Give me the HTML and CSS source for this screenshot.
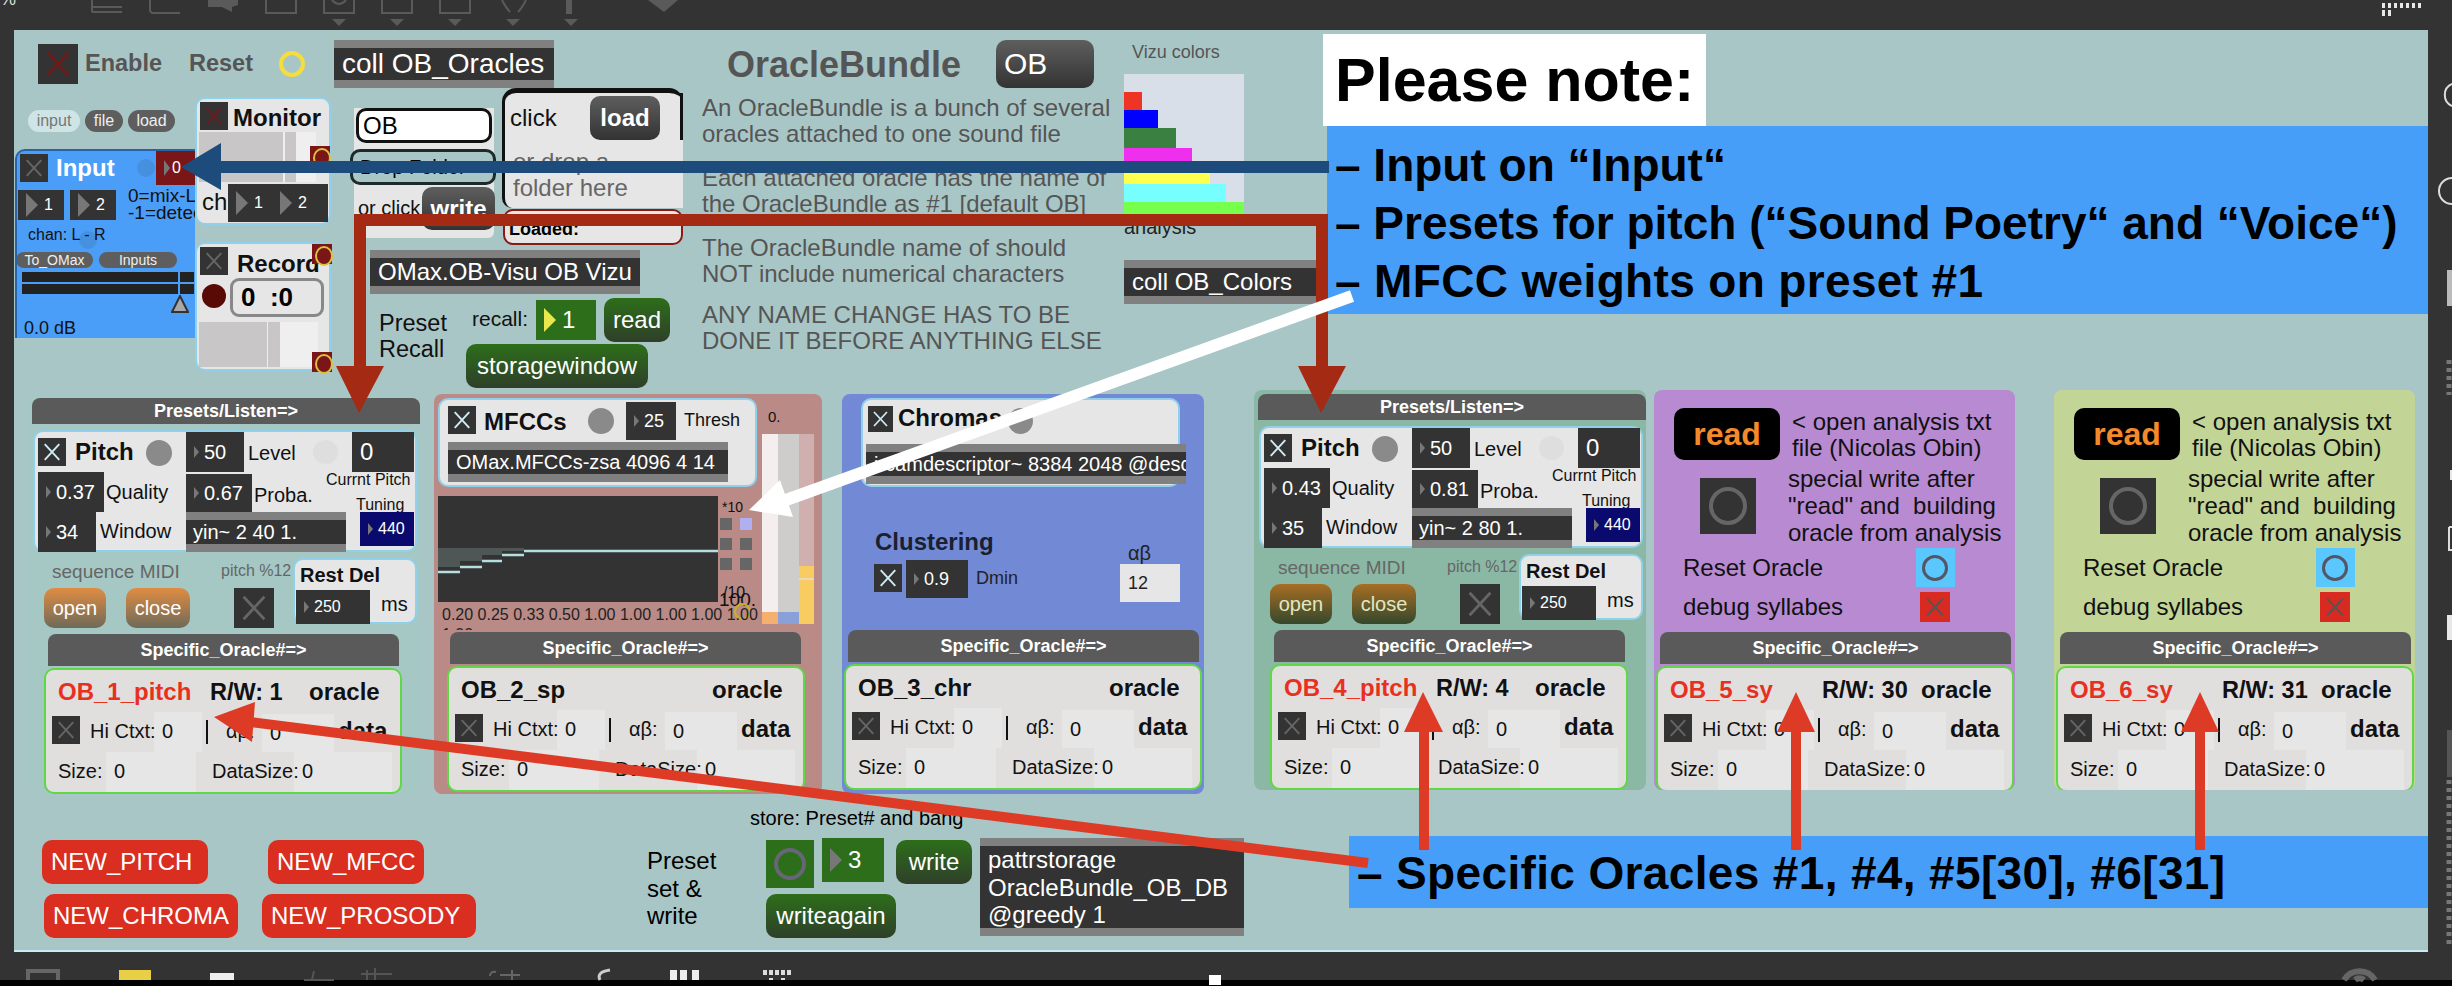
FILE: index.html
```html
<!DOCTYPE html>
<html>

<head>
    <meta charset="utf-8" />
    <title>OracleBundle</title>
    <link rel="stylesheet" href="styles.css">
</head>

<body>
<svg class="defs" width="0" height="0">
    <symbol id="x" viewBox="0 0 100 100"><path d="M24 22L76 78M76 22L24 78" fill="none" stroke="currentColor" stroke-width="7"/></symbol>
</svg>

<div class="page">
    <div class="canvas"></div>

    <!-- window chrome -->
    <svg class="chrome" width="2452" height="986" viewBox="0 0 2452 986">
        <text x="0" y="5" fill="#ddd" font-size="18" font-family="Liberation Sans">%</text>
        <g fill="none" stroke="#5a5a5a" stroke-width="2">
            <path d="M92 12H122M92 7H122M92 0V12"/>
            <path d="M150 0V10Q150 13 154 13H180"/>
            <path d="M266 0V13H296V0"/>
            <path d="M324 0V13H354V0M332 0Q339 8 346 0"/>
            <path d="M382 0V13H412V0"/>
            <path d="M440 0V13H470V0"/>
            <path d="M502 0Q506 8 510 12M526 0Q522 8 518 12"/>
        </g>
        <g fill="#5a5a5a">
            <path d="M208 0H238V5L232 7V12L222 7H208Z"/>
            <path d="M566 0H572V14H566Z"/>
            <path d="M648 0H678L664 12Z"/>
            <path d="M332 19H346L339 26Z"/><path d="M390 19H404L397 26Z"/><path d="M448 19H462L455 26Z"/><path d="M506 19H520L513 26Z"/><path d="M564 19H578L571 26Z"/>
        </g>
        <g fill="#e8e8e8">
            <path d="M2382 3h3v5h-3zM2388 3h3v5h-3zM2394 3h3v5h-3zM2400 3h3v5h-3zM2406 3h3v5h-3zM2412 3h3v5h-3zM2418 3h3v5h-3zM2382 10h3v6h-3zM2388 10h3v6h-3z"/>
            <path d="M2450 470h2v10h-2zM2447 615h5v25h-5z"/>
        </g>
        <path d="M2452 84A12 12 0 0 0 2452 106M2452 178A13 13 0 0 0 2452 204M2449 527H2452M2449 527V550H2452" fill="none" stroke="#ddd" stroke-width="2"/>
        <path d="M2447 270h5v36h-5z" fill="#bbb"/>
        <path d="M2447 730h5v47h-5z" fill="#555"/>
        <path d="M2449 780V947M2449 360V395" stroke="#777" stroke-width="5" stroke-dasharray="4 4"/>
        <rect x="0" y="980" width="2452" height="6" fill="#000"/>
        <path d="M28 980V971H58V980" fill="none" stroke="#666" stroke-width="4"/>
        <rect x="119" y="970" width="32" height="10" fill="#e8cf45"/>
        <rect x="210" y="973" width="24" height="7" fill="#eee"/>
        <path d="M312 980L314 971M304 980H334M375 968V980M367 970V980M361 974H392" fill="none" stroke="#555" stroke-width="2"/>
        <path d="M490 976Q490 971 496 972M512 970V980M500 975H520" fill="none" stroke="#666" stroke-width="2"/>
        <path d="M600 980Q596 972 610 970" fill="none" stroke="#ccc" stroke-width="3"/>
        <path d="M670 970h7v10h-7zM680 970h7v10h-7zM692 970h7v10h-7z" fill="#eee"/>
        <path d="M763 970h4v5h-4zM769 970h4v5h-4zM775 970h4v5h-4zM781 970h4v5h-4zM787 970h4v5h-4zM769 978h4v2h-4zM781 978h4v2h-4z" fill="#ddd"/>
        <rect x="1209" y="975" width="12" height="10" fill="#fff"/>
        <path d="M2344 980A18 18 0 0 1 2375 980M2355 980A7 7 0 0 1 2364 980" fill="none" stroke="#666" stroke-width="6"/>
    </svg>

    <!-- top strip -->
    <div class="toggle t-enable"><svg><use href="#x"/></svg></div>
    <div class="lbl l-enable">Enable</div>
    <div class="lbl l-reset">Reset</div>
    <div class="ring r-reset"></div>
    <div class="obj o-oracles">coll OB_Oracles</div>

    <div class="pill p-input">input</div>
    <div class="pill p-file">file</div>
    <div class="pill p-load">load</div>

    <!-- input module -->
    <div class="input-panel">
        <div class="toggle i-tog"><svg><use href="#x"/></svg></div>
        <div class="lbl i-title">Input</div>
        <div class="dot i-dot1"></div>
        <div class="dot i-dot2"></div>
        <div class="num big i-ch0"><i></i><span>0</span></div>
        <div class="num big i-ch1"><i></i><span>1</span></div>
        <div class="num big i-ch2"><i></i><span>2</span></div>
        <div class="lbl i-mix">0=mix-LR</div>
        <div class="lbl i-det">-1=detect</div>
        <div class="lbl i-chan">chan: L - R</div>
        <div class="pill p-omax">To_OMax</div>
        <div class="pill p-inputs">Inputs</div>
        <div class="meter i-m1"></div>
        <div class="meter i-m2"></div>
        <svg class="i-tri" viewBox="0 0 18 18"><path d="M9 1L17 17H1Z" fill="#a8a8a8" stroke="#333" stroke-width="2"/></svg>
        <div class="lbl i-db">0.0 dB</div>
    </div>

    <div class="mod-box mon-box">
        <div class="toggle m-tog"><svg><use href="#x"/></svg></div>
        <div class="lbl m-title">Monitor</div>
        <div class="gain m-gain"></div>
        <div class="lbl m-ch">ch</div>
        <div class="ch-pair">
            <div class="num big m-1"><i></i><span>1</span></div>
            <div class="num big m-2"><i></i><span>2</span></div>
        </div>
    </div>
    <div class="tiny b-mon"></div>

    <div class="mod-box rec-box">
        <div class="toggle m-tog"><svg><use href="#x"/></svg></div>
        <div class="lbl r-title">Record</div>
        <div class="rec-dot"></div>
        <div class="rec-time">0 &nbsp;:0</div>
        <div class="gain r-gain"></div>
    </div>
    <div class="tiny b-rec1"></div>
    <div class="tiny b-rec2"></div>

    <!-- name and folder -->
    <div class="name-back"></div>
    <div class="name-field">OB</div>
    <div class="drop-field">Drop Folder</div>
    <div class="lbl l-orclick">or click</div>
    <div class="msg dark m-write">write</div>
    <div class="click-box">
        <div class="lbl c-click">click</div>
        <div class="msg dark m-load">load</div>
        <div class="lbl c-drop">or drop a</div>
        <div class="lbl c-folder">folder here</div>
    </div>
    <div class="loaded-box">Loaded:</div>

    <div class="obj o-vizu">OMax.OB-Visu OB Vizu</div>
    <div class="lbl l-preset">Preset<br>Recall</div>
    <div class="lbl l-recall">recall:</div>
    <div class="num big green n-recall"><i class="yel"></i><span>1</span></div>
    <div class="msg green m-read">read</div>
    <div class="msg green m-storage">storagewindow</div>

    <!-- title and notes -->
    <div class="lbl l-bundle">OracleBundle</div>
    <div class="msg dark m-ob">OB</div>
    <div class="help h-1">An OracleBundle is a bunch of several<br>oracles attached to one sound file</div>
    <div class="help h-2">Each attached oracle has the name of<br>the OracleBundle as #1 [default OB]</div>
    <div class="help h-3">The OracleBundle name of should<br>NOT include numerical characters</div>
    <div class="help h-4">ANY NAME CHANGE HAS TO BE<br>DONE IT BEFORE ANYTHING ELSE</div>

    <div class="lbl l-vizu">Vizu colors</div>
    <div class="colors">
        <div class="bar" style="width:18px;background:#ee3424"></div>
        <div class="bar" style="width:34px;background:#0000ff"></div>
        <div class="bar tall" style="width:52px;background:#3a8040"></div>
        <div class="bar" style="width:68px;background:#ee30ee"></div>
        <div class="bar" style="width:86px;background:#ffff4d"></div>
        <div class="bar" style="width:102px;background:#77ffff"></div>
        <div class="bar" style="width:120px;background:#77ff4d"></div>
    </div>
    <div class="lbl l-analysis">analysis</div>
    <div class="obj o-colors">coll OB_Colors</div>

    <!-- pitch oracle 1 -->
    <div class="panel pitch-a">
        <div class="head h-presets">Presets/Listen=&gt;</div>
        <div class="mod-box pt-box"></div>
        <div class="toggle pt-tog"><svg><use href="#x"/></svg></div>
        <div class="lbl pt-title">Pitch</div>
        <div class="dot pt-on"></div>
        <div class="num pt-level"><i></i><span>50</span></div>
        <div class="lbl pt-lvl">Level</div>
        <div class="dot pt-off"></div>
        <div class="flonum pt-cur">0</div>
        <div class="num pt-q"><i></i><span>0.37</span></div>
        <div class="lbl pt-ql">Quality</div>
        <div class="num pt-p"><i></i><span>0.67</span></div>
        <div class="lbl pt-pl">Proba.</div>
        <div class="lbl pt-cp">Currnt Pitch</div>
        <div class="lbl pt-tu">Tuning</div>
        <div class="num pt-w"><i></i><span>34</span></div>
        <div class="lbl pt-wl">Window</div>
        <div class="obj pt-yin">yin~ 2 40 1.</div>
        <div class="num navy pt-440"><i></i><span>440</span></div>
        <div class="lbl pt-seq">sequence MIDI</div>
        <div class="lbl pt-mod">pitch %12</div>
        <div class="msg orange pt-open">open</div>
        <div class="msg orange pt-close">close</div>
        <div class="toggle pt-big"><svg><use href="#x"/></svg></div>
        <div class="mod-box pt-rest"></div>
        <div class="lbl pt-rd">Rest Del</div>
        <div class="num pt-250"><i></i><span>250</span></div>
        <div class="lbl pt-ms">ms</div>
        <div class="head h-spec h-spec-a">Specific_Oracle#=&gt;</div>
        <div class="oracle or-a">
            <div class="lbl or-name hot">OB_1_pitch</div>
            <div class="lbl or-rw">R/W: 1</div>
            <div class="lbl or-oracle">oracle</div>
            <div class="toggle or-tog"><svg><use href="#x"/></svg></div>
            <div class="cell c-hi"></div><div class="cell c-ab"></div><div class="cell c-sz"></div><div class="cell c-ds"></div>
            <div class="lbl or-hi">Hi Ctxt:</div><div class="lbl or-hi0">0</div>
            <div class="or-sep"></div>
            <div class="lbl or-ab">αβ:</div><div class="lbl or-ab0">0</div>
            <div class="lbl or-data">data</div>
            <div class="lbl or-sz">Size:</div><div class="lbl or-sz0">0</div>
            <div class="lbl or-ds">DataSize:</div><div class="lbl or-ds0">0</div>
        </div>
    </div>

    <!-- mfcc oracle -->
    <div class="panel mfcc">
        <div class="mod-box mf-box"></div>
        <div class="toggle mf-tog"><svg><use href="#x"/></svg></div>
        <div class="lbl mf-title">MFCCs</div>
        <div class="dot mf-on"></div>
        <div class="num mf-25"><i></i><span>25</span></div>
        <div class="lbl mf-th">Thresh</div>
        <div class="obj mf-obj">OMax.MFCCs-zsa 4096 4 14</div>
        <svg class="mf-multi" viewBox="0 0 280 106">
            <path d="M0 52H86V55H64V59H44V65H22V71H0Z" fill="#4f5656"/>
            <path d="M0 76H22M22 71H44M44 65H64M64 59H86M86 55H280" fill="none" stroke="#b5dede" stroke-width="2.5"/>
        </svg>
        <div class="lbl mf-x10">*10</div>
        <div class="sq s1"></div><div class="sq s2 lit"></div>
        <div class="sq s3"></div><div class="sq s4"></div>
        <div class="sq s5"></div><div class="sq s6"></div>
        <div class="lbl mf-div">/10</div>
        <div class="lbl mf-100">100.</div>
        <div class="ring mf-ring"></div>
        <div class="lbl mf-0">0.</div>
        <div class="vs v1"></div><div class="vs v2"></div><div class="vs v3"></div>
        <div class="mf-weights">0.20 0.25 0.33 0.50 1.00 1.00 1.00 1.00 1.00 1.00<br>1.00 1.00 1.00</div>
        <div class="head h-spec h-spec-b">Specific_Oracle#=&gt;</div>
        <div class="oracle or-b">
            <div class="lbl or-name">OB_2_sp</div>
            <div class="lbl or-oracle">oracle</div>
            <div class="toggle or-tog"><svg><use href="#x"/></svg></div>
            <div class="cell c-hi"></div><div class="cell c-ab"></div><div class="cell c-sz"></div><div class="cell c-ds"></div>
            <div class="lbl or-hi">Hi Ctxt:</div><div class="lbl or-hi0">0</div>
            <div class="or-sep"></div>
            <div class="lbl or-ab">αβ:</div><div class="lbl or-ab0">0</div>
            <div class="lbl or-data">data</div>
            <div class="lbl or-sz">Size:</div><div class="lbl or-sz0">0</div>
            <div class="lbl or-ds">DataSize:</div><div class="lbl or-ds0">0</div>
        </div>
    </div>

    <!-- chroma oracle -->
    <div class="panel chroma">
        <div class="mod-box ch-box"></div>
        <div class="toggle ch-tog"><svg><use href="#x"/></svg></div>
        <div class="lbl ch-title">Chromas</div>
        <div class="dot ch-on"></div>
        <div class="obj ch-obj">ircamdescriptor~ 8384 2048 @descriptors</div>
        <div class="lbl ch-cl">Clustering</div>
        <div class="toggle ch-tog2"><svg><use href="#x"/></svg></div>
        <div class="num ch-09"><i></i><span>0.9</span></div>
        <div class="lbl ch-dm">Dmin</div>
        <div class="lbl ch-ab">αβ</div>
        <div class="flonum ch-12">12</div>
        <div class="head h-spec h-spec-c">Specific_Oracle#=&gt;</div>
        <div class="oracle or-c">
            <div class="lbl or-name">OB_3_chr</div>
            <div class="lbl or-oracle">oracle</div>
            <div class="toggle or-tog"><svg><use href="#x"/></svg></div>
            <div class="cell c-hi"></div><div class="cell c-ab"></div><div class="cell c-sz"></div><div class="cell c-ds"></div>
            <div class="lbl or-hi">Hi Ctxt:</div><div class="lbl or-hi0">0</div>
            <div class="or-sep"></div>
            <div class="lbl or-ab">αβ:</div><div class="lbl or-ab0">0</div>
            <div class="lbl or-data">data</div>
            <div class="lbl or-sz">Size:</div><div class="lbl or-sz0">0</div>
            <div class="lbl or-ds">DataSize:</div><div class="lbl or-ds0">0</div>
        </div>
    </div>

    <!-- pitch oracle 4 -->
    <div class="panel pitch-b">
        <div class="head h-presets">Presets/Listen=&gt;</div>
        <div class="mod-box pt-box"></div>
        <div class="toggle pt-tog"><svg><use href="#x"/></svg></div>
        <div class="lbl pt-title">Pitch</div>
        <div class="dot pt-on"></div>
        <div class="num pt-level"><i></i><span>50</span></div>
        <div class="lbl pt-lvl">Level</div>
        <div class="dot pt-off"></div>
        <div class="flonum pt-cur">0</div>
        <div class="num pt-q"><i></i><span>0.43</span></div>
        <div class="lbl pt-ql">Quality</div>
        <div class="num pt-p"><i></i><span>0.81</span></div>
        <div class="lbl pt-pl">Proba.</div>
        <div class="lbl pt-cp">Currnt Pitch</div>
        <div class="lbl pt-tu">Tuning</div>
        <div class="num pt-w"><i></i><span>35</span></div>
        <div class="lbl pt-wl">Window</div>
        <div class="obj pt-yin">yin~ 2 80 1.</div>
        <div class="num navy pt-440"><i></i><span>440</span></div>
        <div class="lbl pt-seq">sequence MIDI</div>
        <div class="lbl pt-mod">pitch %12</div>
        <div class="msg orange-dim pt-open">open</div>
        <div class="msg orange-dim pt-close">close</div>
        <div class="toggle pt-big"><svg><use href="#x"/></svg></div>
        <div class="mod-box pt-rest"></div>
        <div class="lbl pt-rd">Rest Del</div>
        <div class="num pt-250"><i></i><span>250</span></div>
        <div class="lbl pt-ms">ms</div>
        <div class="head h-spec h-spec-a">Specific_Oracle#=&gt;</div>
        <div class="oracle or-a">
            <div class="lbl or-name hot">OB_4_pitch</div>
            <div class="lbl or-rw">R/W: 4</div>
            <div class="lbl or-oracle">oracle</div>
            <div class="toggle or-tog"><svg><use href="#x"/></svg></div>
            <div class="cell c-hi"></div><div class="cell c-ab"></div><div class="cell c-sz"></div><div class="cell c-ds"></div>
            <div class="lbl or-hi">Hi Ctxt:</div><div class="lbl or-hi0">0</div>
            <div class="or-sep"></div>
            <div class="lbl or-ab">αβ:</div><div class="lbl or-ab0">0</div>
            <div class="lbl or-data">data</div>
            <div class="lbl or-sz">Size:</div><div class="lbl or-sz0">0</div>
            <div class="lbl or-ds">DataSize:</div><div class="lbl or-ds0">0</div>
        </div>
    </div>

    <!-- syllable oracles -->
    <div class="panel syl syl-a">
        <div class="read-btn">read</div>
        <div class="lbl sy-open">&lt; open analysis txt<br>file (Nicolas Obin)</div>
        <div class="sy-bang"><div class="ring sy-ring"></div></div>
        <div class="lbl sy-spec">special write after<br>"read" and &nbsp;building<br>oracle from analysis</div>
        <div class="lbl sy-reset">Reset Oracle</div>
        <div class="sy-blue"><div class="ring sy-blue-ring"></div></div>
        <div class="lbl sy-debug">debug syllabes</div>
        <div class="toggle sy-red"><svg><use href="#x"/></svg></div>
        <div class="head h-spec h-spec-d">Specific_Oracle#=&gt;</div>
        <div class="oracle or-d">
            <div class="lbl or-name hot">OB_5_sy</div>
            <div class="lbl or-rw">R/W: 30</div>
            <div class="lbl or-oracle">oracle</div>
            <div class="toggle or-tog"><svg><use href="#x"/></svg></div>
            <div class="cell c-hi"></div><div class="cell c-ab"></div><div class="cell c-sz"></div><div class="cell c-ds"></div>
            <div class="lbl or-hi">Hi Ctxt:</div><div class="lbl or-hi0">0</div>
            <div class="or-sep"></div>
            <div class="lbl or-ab">αβ:</div><div class="lbl or-ab0">0</div>
            <div class="lbl or-data">data</div>
            <div class="lbl or-sz">Size:</div><div class="lbl or-sz0">0</div>
            <div class="lbl or-ds">DataSize:</div><div class="lbl or-ds0">0</div>
        </div>
    </div>

    <div class="panel syl syl-b">
        <div class="read-btn">read</div>
        <div class="lbl sy-open">&lt; open analysis txt<br>file (Nicolas Obin)</div>
        <div class="sy-bang"><div class="ring sy-ring"></div></div>
        <div class="lbl sy-spec">special write after<br>"read" and &nbsp;building<br>oracle from analysis</div>
        <div class="lbl sy-reset">Reset Oracle</div>
        <div class="sy-blue"><div class="ring sy-blue-ring"></div></div>
        <div class="lbl sy-debug">debug syllabes</div>
        <div class="toggle sy-red"><svg><use href="#x"/></svg></div>
        <div class="head h-spec h-spec-d">Specific_Oracle#=&gt;</div>
        <div class="oracle or-d">
            <div class="lbl or-name hot">OB_6_sy</div>
            <div class="lbl or-rw">R/W: 31</div>
            <div class="lbl or-oracle">oracle</div>
            <div class="toggle or-tog"><svg><use href="#x"/></svg></div>
            <div class="cell c-hi"></div><div class="cell c-ab"></div><div class="cell c-sz"></div><div class="cell c-ds"></div>
            <div class="lbl or-hi">Hi Ctxt:</div><div class="lbl or-hi0">0</div>
            <div class="or-sep"></div>
            <div class="lbl or-ab">αβ:</div><div class="lbl or-ab0">0</div>
            <div class="lbl or-data">data</div>
            <div class="lbl or-sz">Size:</div><div class="lbl or-sz0">0</div>
            <div class="lbl or-ds">DataSize:</div><div class="lbl or-ds0">0</div>
        </div>
    </div>

    <!-- bottom strip -->
    <div class="msg red b-pitch">NEW_PITCH</div>
    <div class="msg red b-mfcc">NEW_MFCC</div>
    <div class="msg red b-chroma">NEW_CHROMA</div>
    <div class="msg red b-prosody">NEW_PROSODY</div>
    <div class="lbl l-store">store: Preset# and bang</div>
    <div class="lbl l-set">Preset<br>set &amp;<br>write</div>
    <div class="gbang"><div class="ring g-ring"></div></div>
    <div class="num big green n-three"><i></i><span>3</span></div>
    <div class="msg green m-wr">write</div>
    <div class="msg green m-again">writeagain</div>
    <div class="obj o-pattr">pattrstorage<br>OracleBundle_OB_DB<br>@greedy 1</div>

    <!-- annotations laid over the patch -->
    <div class="note-title">Please note:</div>
    <div class="note-blue">
        <div>– Input on “Input“</div>
        <div>– Presets for pitch (“Sound Poetry“ and “Voice“)</div>
        <div class="note-wide">– MFCC weights on preset #1</div>
    </div>
    <div class="note-low">– Specific Oracles #1, #4, #5[30], #6[31]</div>

    <svg class="arrows" width="2452" height="986" viewBox="0 0 2452 986">
        <path d="M360 366V220H1322V366" fill="none" stroke="#a52a14" stroke-width="12"/>
        <path d="M336 366H384L359 413ZM1298 366H1346L1321 413Z" fill="#a52a14"/>
        <path d="M220 167H1329" stroke="#1c4b7c" stroke-width="12"/>
        <path d="M181 167L221 143V190Z" fill="#1c4b7c"/>
        <path d="M1352 296L786 500" stroke="#fff" stroke-width="12"/>
        <path d="M749 510L780 480L793 517Z" fill="#fff"/>
        <path d="M250 722L1368 863" stroke="#dd3b26" stroke-width="10"/>
        <path d="M214 717L255 702L252 742Z" fill="#dd3b26"/>
        <path d="M1424 730V850M1796 730V850M2200 730V850" stroke="#dd3b26" stroke-width="10"/>
        <path d="M1423 692L1443 732H1404ZM1796 692L1815 732H1777ZM2200 692L2219 732H2181Z" fill="#dd3b26"/>
    </svg>
</div>
</body>

</html>
```

FILE: styles.css
```css
* {
    padding: 0;
    margin: 0;
    box-sizing: border-box;
}

body {
    background: #333;
    font-family: "Liberation Sans", Arial, sans-serif;
    overflow: hidden;
}

.defs {
    position: absolute;
}

.page {
    position: relative;
    width: 2452px;
    height: 986px;
    background: #333;
    overflow: hidden;
}

.canvas {
    position: absolute;
    left: 14px;
    top: 30px;
    width: 2414px;
    height: 922px;
    background: #a9c6c6;
    border-bottom: 2px solid #c8ecf5;
}

.chrome,
.arrows {
    position: absolute;
    left: 0;
    top: 0;
}

/* widgets */
.lbl {
    position: absolute;
    line-height: 26px;
    white-space: nowrap;
    color: #111;
    font-size: 20px;
}

.toggle {
    position: absolute;
    background: #333;
    color: #666;
}

.toggle svg {
    display: block;
    width: 100%;
    height: 100%;
}

.ring {
    position: absolute;
    border-radius: 50%;
    border: 4px solid #777;
}

.dot {
    position: absolute;
    border-radius: 50%;
    background: #8a8a8a;
}

.pill {
    position: absolute;
    border-radius: 11px;
    background: #5e5e5e;
    color: #eee;
    font-size: 16px;
    display: flex;
    align-items: center;
    justify-content: center;
}

.num {
    position: absolute;
    display: flex;
    align-items: center;
    background: #333;
    color: #fff;
    font-size: 20px;
    overflow: hidden;
}

.num i {
    flex: none;
    margin: 0 5px 0 8px;
    border-left: 5px solid #777;
    border-top: 6px solid transparent;
    border-bottom: 6px solid transparent;
}

.num.big i {
    margin: 0 6px 0 8px;
    border-left-width: 12px;
    border-top-width: 12px;
    border-bottom-width: 12px;
}

.num.big {
    font-size: 16px;
}

.num i.yel {
    border-left-color: #e8e84a;
}

.num.green {
    background: #2d6e1a;
    font-size: 24px;
}

.num.navy {
    background: #0a0a6e;
    font-size: 16px;
}

.flonum {
    position: absolute;
    background: #333;
    color: #fff;
    font-size: 24px;
    display: flex;
    align-items: center;
    padding-left: 8px;
}

.msg {
    position: absolute;
    display: flex;
    align-items: center;
    justify-content: center;
    border-radius: 10px;
    color: #fff;
    font-size: 24px;
    white-space: nowrap;
}

.msg.dark {
    background: linear-gradient(#5e5e5e, #333);
    font-weight: bold;
}

.msg.green {
    background: linear-gradient(#2d6e1a, #2f3f2a);
}

.msg.orange {
    background: linear-gradient(#e08c42, #6e6a5a);
    font-size: 20px;
}

.msg.orange-dim {
    background: linear-gradient(#a86e24, #34482c);
    font-size: 20px;
    color: #dfe8c8;
}

.msg.red {
    background: #d92e20;
    justify-content: flex-start;
    padding-left: 9px;
}

.obj {
    position: absolute;
    background: #333;
    border-top: 8px solid #808080;
    border-bottom: 8px solid #808080;
    color: #fff;
    font-size: 24px;
    line-height: 26px;
    padding: 2px 8px;
    white-space: nowrap;
    overflow: hidden;
    display: flex;
    align-items: center;
}

.mod-box {
    position: absolute;
    background: #e6e6e6;
    border: 2px solid #8fd0ea;
    border-radius: 10px;
}

.gain {
    position: absolute;
}

.tiny {
    position: absolute;
    width: 20px;
    height: 20px;
    background: #7a1518;
}

.tiny::after {
    content: "";
    position: absolute;
    left: 3px;
    top: 2px;
    width: 14px;
    height: 16px;
    border: 2px solid #dcc23c;
    border-radius: 50%;
}

/* top strip */
.t-enable { left: 38px; top: 44px; width: 40px; height: 40px; color: #6e1a1a; }
.l-enable { left: 85px; top: 50px; font-size: 23.5px; font-weight: bold; color: #555; }
.l-reset { left: 189px; top: 50px; font-size: 23.5px; font-weight: bold; color: #555; }
.r-reset { left: 279px; top: 51px; width: 26px; height: 26px; border-color: #f5de3c; }
.o-oracles { left: 334px; top: 40px; width: 220px; height: 48px; font-size: 28px; }
.p-input { left: 28px; top: 110px; width: 52px; height: 22px; background: #cfe5e5; color: #777; }
.p-file { left: 85px; top: 110px; width: 38px; height: 22px; }
.p-load { left: 128px; top: 110px; width: 47px; height: 22px; }

/* input module */
.input-panel {
    position: absolute;
    left: 15px;
    top: 149px;
    width: 180px;
    height: 189px;
    background: #4a9ef8;
    border-left: 2px solid #2a62a8;
    border-top: 2px solid #2a62a8;
    border-radius: 10px 0 0 0;
    overflow: hidden;
}

.i-tog { left: 3px; top: 3px; width: 28px; height: 28px; }
.i-title { left: 39px; top: 4px; font-size: 24px; font-weight: bold; color: #fff; }
.dot.i-dot1 { left: 120px; top: 8px; width: 18px; height: 18px; background: #4690e0; }
.dot.i-dot2 { left: 62px; top: 80px; width: 18px; height: 18px; background: #4690e0; }
.i-ch0 { left: 139px; top: 0; width: 39px; height: 34px; background: #7a1518; }
.num.big.i-ch0 i { margin-right: 2px; margin-left: 8px; border-left-width: 6px; border-top-width: 8px; border-bottom-width: 8px; }
.i-ch1 { left: 1px; top: 39px; width: 46px; height: 30px; }
.i-ch2 { left: 53px; top: 39px; width: 46px; height: 30px; }
.i-mix { left: 111px; top: 32px; font-size: 19px; }
.i-det { left: 111px; top: 49px; font-size: 19px; }
.i-chan { left: 11px; top: 71px; font-size: 16px; }
.p-omax { left: -1px; top: 101px; width: 77px; height: 16px; font-size: 14px; }
.p-inputs { left: 82px; top: 101px; width: 78px; height: 16px; font-size: 14px; }
.meter { position: absolute; left: 5px; width: 172px; height: 10px; background: linear-gradient(to right, #222 156px, #4a9ef8 156px 158px, #222 158px); }
.i-m1 { top: 121px; }
.i-m2 { top: 133px; }
.i-tri { position: absolute; left: 154px; top: 144px; width: 18px; height: 18px; }
.i-db { left: 7px; top: 164px; font-size: 18px; }

.mon-box { left: 195px; top: 97px; width: 136px; height: 128px; }
.rec-box { left: 195px; top: 242px; width: 136px; height: 129px; }
.m-tog { left: 3px; top: 3px; width: 28px; height: 28px; }
.mon-box .m-tog { color: #6e1a1a; }
.m-title { left: 36px; top: 6px; font-size: 24px; font-weight: bold; }
.m-gain { left: 2px; top: 33px; width: 117px; height: 50px; background: linear-gradient(to right, #c8c6c6 84px, #efefef 84px 86px, #c8c6c6 86px 97px, #efefef 97px); }
.m-ch { left: 5px; top: 90px; font-size: 24px; }
.ch-pair { position: absolute; left: 31px; top: 85px; width: 100px; height: 38px; background: #333; display: flex; }
.m-1 { position: static; width: 44px; font-size: 22px; }
.m-2 { position: static; width: 56px; font-size: 22px; }
.r-title { left: 40px; top: 7px; font-size: 24px; font-weight: bold; }
.rec-dot { position: absolute; left: 5px; top: 40px; width: 24px; height: 24px; border-radius: 50%; background: #5a0a05; }
.rec-time { position: absolute; left: 33px; top: 34px; width: 94px; height: 39px; border: 3px solid #888; border-radius: 9px; font-size: 26px; font-weight: bold; line-height: 33px; padding-left: 8px; white-space: nowrap; }
.r-gain { left: 2px; top: 78px; width: 119px; height: 45px; background: linear-gradient(to right, #c8c6c6 68px, #efefef 68px 69px, #c8c6c6 69px 81px, #efefef 81px); }
.b-mon { left: 310px; top: 146px; }
.b-rec1 { left: 312px; top: 244px; }
.b-rec2 { left: 312px; top: 352px; }

/* name and folder */
.name-back { position: absolute; left: 354px; top: 108px; width: 140px; height: 130px; background: #e6e6e6; border-radius: 0 0 6px 6px; }
.name-field { position: absolute; left: 356px; top: 108px; width: 136px; height: 35px; background: #fff; border: 3px solid #111; border-radius: 10px; font-size: 24px; line-height: 29px; padding-left: 4px; }
.drop-field { position: absolute; left: 350px; top: 149px; width: 146px; height: 36px; border: 3px solid #1e2a2a; border-radius: 10px; background: #a9c6c6; font-size: 20px; line-height: 30px; padding-left: 7px; white-space: nowrap; overflow: hidden; }
.l-orclick { left: 358px; top: 195px; font-size: 20px; }
.m-write { left: 422px; top: 187px; width: 73px; height: 43px; }
.click-box { position: absolute; left: 502px; top: 88px; width: 181px; height: 120px; background: #e6e6e6; border-top: 5px solid #111; border-left: 3px solid #111; border-radius: 14px 14px 0 10px; }
.click-box::after { content: ""; position: absolute; right: 0; top: 0; width: 3px; height: 47px; background: #111; }
.c-click { left: 5px; top: 12px; font-size: 24px; }
.m-load { left: 85px; top: 3px; width: 70px; height: 44px; }
.c-drop { left: 8px; top: 56px; font-size: 24px; color: #666; }
.c-folder { left: 8px; top: 82px; font-size: 24px; color: #666; }
.loaded-box { position: absolute; left: 503px; top: 209px; width: 180px; height: 36px; background: #e6e6e6; border: 2px solid #8a1a14; border-radius: 10px; font-size: 18px; font-weight: bold; line-height: 32px; padding-left: 4px; padding-top: 2px; }
.o-vizu { left: 370px; top: 250px; width: 270px; height: 44px; }
.l-preset { left: 379px; top: 310px; font-size: 23.5px; }
.l-recall { left: 472px; top: 306px; font-size: 21px; }
.n-recall { left: 536px; top: 300px; width: 60px; height: 40px; }
.m-read { left: 604px; top: 298px; width: 66px; height: 44px; }
.m-storage { left: 466px; top: 344px; width: 182px; height: 44px; }

/* title and notes */
.l-bundle { left: 727px; top: 52px; font-size: 36px; font-weight: bold; color: #555; }
.msg.m-ob { left: 996px; top: 40px; width: 98px; height: 48px; font-size: 30px; font-weight: normal; justify-content: flex-start; padding-left: 8px; }
.help { position: absolute; left: 702px; font-size: 24px; line-height: 26px; color: #555; white-space: nowrap; }
.h-1 { top: 95px; }
.h-2 { top: 165px; }
.h-3 { top: 235px; }
.h-4 { top: 302px; }
.l-vizu { left: 1132px; top: 39px; font-size: 18px; color: #555; }
.colors { position: absolute; left: 1124px; top: 74px; width: 120px; height: 146px; padding-top: 18px; background: #d8dfe8; overflow: hidden; }
.bar { height: 18px; }
.bar.tall { height: 20px; }
.l-analysis { left: 1124px; top: 214px; font-size: 20px; color: #222; }
.o-colors { left: 1124px; top: 260px; width: 192px; height: 44px; }

/* panels */
.panel {
    position: absolute;
    width: 392px;
    height: 400px;
    border-radius: 8px;
    overflow: hidden;
}

.pitch-a { left: 28px; top: 394px; background: #a5c8c5; }
.pitch-b { left: 1254px; top: 390px; background: #8ab8a5; }
.mfcc { left: 434px; top: 394px; width: 388px; background: #b98a86; }
.chroma { left: 842px; top: 394px; width: 362px; background: #7289d6; }
.syl { width: 361px; top: 390px; }
.syl-a { left: 1654px; background: #b88ad2; }
.syl-b { left: 2054px; background: #c3d596; }

.head {
    position: absolute;
    background: #5a5a5a;
    color: #fff;
    font-size: 18px;
    font-weight: bold;
    border-radius: 8px 8px 0 0;
    display: flex;
    align-items: center;
    justify-content: center;
}

.h-presets { left: 4px; top: 4px; width: 388px; height: 26px; }
.h-spec { width: 351px; height: 32px; }
.h-spec-a { left: 20px; top: 240px; }
.h-spec-b { left: 16px; top: 238px; }
.h-spec-c { left: 6px; top: 236px; }
.h-spec-d { left: 6px; top: 242px; }

/* pitch panel widgets */
.pt-box { left: 5px; top: 36px; width: 384px; height: 122px; overflow: hidden; }
.pt-tog { left: 10px; top: 44px; width: 28px; height: 28px; color: #cfeaf5; }
.pt-title { left: 47px; top: 45px; font-size: 24px; font-weight: bold; }
.pt-on { left: 118px; top: 46px; width: 26px; height: 26px; }
.pt-level { left: 158px; top: 38px; width: 58px; height: 40px; }
.pt-lvl { left: 220px; top: 46px; }
.dot.pt-off { left: 285px; top: 46px; width: 25px; height: 24px; background: #dedede; }
.pt-cur { left: 324px; top: 38px; width: 62px; height: 40px; }
.pt-q { left: 10px; top: 78px; width: 66px; height: 40px; }
.pt-ql { left: 78px; top: 85px; }
.pt-p { left: 158px; top: 80px; width: 66px; height: 38px; }
.pt-pl { left: 226px; top: 88px; }
.pt-cp { left: 298px; top: 73px; font-size: 16px; }
.pt-tu { left: 328px; top: 98px; font-size: 16px; }
.pt-w { left: 10px; top: 118px; width: 58px; height: 40px; }
.pt-wl { left: 72px; top: 124px; }
.pt-yin { left: 158px; top: 118px; width: 160px; height: 40px; font-size: 20px; padding: 0 7px; }
.pt-440 { left: 332px; top: 118px; width: 54px; height: 34px; }
.pt-seq { left: 24px; top: 165px; font-size: 19px; color: #666; }
.pt-mod { left: 193px; top: 164px; font-size: 16px; color: #666; }
.pt-open { left: 16px; top: 194px; width: 62px; height: 40px; }
.pt-close { left: 98px; top: 194px; width: 64px; height: 40px; }
.pt-big { left: 206px; top: 194px; width: 40px; height: 40px; color: #666; }
.pt-rest { left: 265px; top: 164px; width: 124px; height: 66px; }
.pt-rd { left: 272px; top: 168px; font-weight: bold; }
.pt-250 { left: 268px; top: 196px; width: 74px; height: 34px; font-size: 16px; }
.pt-ms { left: 353px; top: 197px; }

/* oracle box */
.oracle {
    position: absolute;
    width: 358px;
    height: 126px;
    background: #e0dfdd;
    border: 2px solid #5fd845;
    border-radius: 10px;
}

.or-a { left: 16px; top: 274px; }
.or-b { left: 13px; top: 272px; }
.or-c { left: 2px; top: 270px; }
.or-d { left: 2px; top: 276px; }
.oracle .cell, .oracle .lbl, .oracle .toggle, .oracle .or-sep { margin: -2px 0 0 -2px; }

.or-name { left: 14px; top: 11px; font-size: 24px; font-weight: bold; }
.or-name.hot { color: #e8301f; }
.or-rw { left: 166px; top: 11px; font-size: 23.5px; font-weight: bold; }
.or-oracle { left: 265px; top: 11px; font-size: 24px; font-weight: bold; }
.or-tog { left: 8px; top: 48px; width: 28px; height: 28px; }
.cell { position: absolute; background: #e6e6e6; }
.c-hi { left: 110px; top: 44px; width: 48px; height: 40px; }
.c-ab { left: 218px; top: 46px; width: 72px; height: 38px; }
.c-sz { left: 62px; top: 84px; width: 90px; height: 40px; }
.c-ds { left: 250px; top: 84px; width: 98px; height: 40px; }
.or-hi { left: 46px; top: 50px; }
.or-hi0 { left: 118px; top: 50px; }
.or-sep { position: absolute; left: 162px; top: 52px; width: 2px; height: 24px; background: #111; }
.or-ab { left: 182px; top: 50px; }
.or-ab0 { left: 226px; top: 52px; }
.or-data { left: 294px; top: 50px; font-size: 24px; font-weight: bold; }
.or-sz { left: 14px; top: 90px; }
.or-sz0 { left: 70px; top: 90px; }
.or-ds { left: 168px; top: 90px; }
.or-ds0 { left: 258px; top: 90px; }

/* mfcc panel */
.mf-box { left: 4px; top: 4px; width: 319px; height: 89px; }
.mf-tog { left: 14px; top: 12px; width: 28px; height: 28px; color: #cfeaf5; }
.mf-title { left: 50px; top: 15px; font-size: 24px; font-weight: bold; }
.mf-on { left: 154px; top: 14px; width: 26px; height: 26px; }
.mf-25 { left: 192px; top: 8px; width: 50px; height: 38px; font-size: 18px; }
.mf-th { left: 250px; top: 13px; font-size: 18px; }
.mf-obj { left: 14px; top: 48px; width: 280px; height: 40px; font-size: 20px; padding: 0 8px; }
.mf-multi { position: absolute; left: 4px; top: 102px; width: 280px; height: 106px; background: #333; }
.mf-x10 { left: 288px; top: 100px; font-size: 14px; }
.sq { position: absolute; width: 12px; height: 12px; background: #666; }
.s1 { left: 286px; top: 124px; }
.s2 { left: 306px; top: 124px; }
.s2.lit { background: #b0b0f0; }
.s3 { left: 286px; top: 144px; }
.s4 { left: 306px; top: 144px; }
.s5 { left: 286px; top: 164px; }
.s6 { left: 306px; top: 164px; }
.mf-div { left: 289px; top: 186px; font-size: 16px; }
.mf-100 { left: 285px; top: 193px; font-size: 19px; }
.mf-ring { left: 300px; top: 209px; width: 17px; height: 17px; border: 2px solid #c8b02a; }
.mf-0 { left: 334px; top: 10px; font-size: 15px; }
.vs { position: absolute; top: 40px; height: 190px; }
.v1 { left: 328px; width: 16px; background: linear-gradient(#f5eeee 178px, #f5b070 178px); }
.v2 { left: 344px; width: 21px; background: linear-gradient(#cfcccc 178px, #8aa0d8 178px); }
.v3 { left: 365px; width: 15px; background: linear-gradient(#d0b0ae 132px, #f8cc60 132px 144px, #e8d8c0 144px 146px, #f8cc60 146px); }
.mf-weights { position: absolute; left: 8px; top: 211px; width: 327px; height: 25px; line-height: 20px; font-size: 16px; color: #222; overflow: hidden; }

/* chroma panel */
.ch-box { left: 19px; top: 4px; width: 319px; height: 89px; }
.ch-tog { left: 26px; top: 12px; width: 25px; height: 26px; color: #cfeaf5; }
.ch-title { left: 56px; top: 11px; font-size: 24px; font-weight: bold; }
.ch-on { left: 166px; top: 14px; width: 25px; height: 26px; }
.ch-obj { left: 24px; top: 50px; width: 320px; height: 40px; font-size: 20px; padding: 0 8px; }
.ch-cl { left: 33px; top: 135px; font-size: 24px; font-weight: bold; color: #1a2030; }
.ch-tog2 { left: 32px; top: 170px; width: 28px; height: 28px; color: #cfeaf5; }
.ch-09 { left: 64px; top: 166px; width: 62px; height: 38px; font-size: 18px; }
.ch-dm { left: 134px; top: 171px; font-size: 18px; color: #222; }
.ch-ab { left: 286px; top: 146px; color: #222; }
.flonum.ch-12 { left: 278px; top: 170px; width: 60px; height: 38px; background: #e6e6e6; color: #222; font-size: 18px; }

/* syllable panels */
.read-btn { position: absolute; left: 20px; top: 18px; width: 106px; height: 52px; border-radius: 10px; background: #000; color: #f58a2a; font-size: 32px; font-weight: bold; display: flex; align-items: center; justify-content: center; }
.sy-open { left: 138px; top: 19px; font-size: 24px; }
.sy-bang { position: absolute; left: 46px; top: 88px; width: 56px; height: 56px; background: #333; }
.sy-ring { left: 9px; top: 9px; width: 38px; height: 38px; border-color: #666; }
.sy-spec { left: 134px; top: 75px; font-size: 24px; line-height: 27px; }
.sy-reset { left: 29px; top: 165px; font-size: 24px; }
.sy-blue { position: absolute; left: 262px; top: 158px; width: 39px; height: 39px; background: #5ac8ff; }
.sy-blue-ring { left: 6px; top: 7px; width: 26px; height: 26px; border-width: 3px; border-color: #556; }
.sy-debug { left: 29px; top: 204px; font-size: 24px; }
.sy-red { left: 266px; top: 202px; width: 30px; height: 30px; background: #d82a20; color: #555; }

/* bottom strip */
.b-pitch { left: 42px; top: 840px; width: 166px; height: 44px; }
.b-mfcc { left: 268px; top: 840px; width: 156px; height: 44px; }
.b-chroma { left: 44px; top: 894px; width: 194px; height: 44px; }
.b-prosody { left: 262px; top: 894px; width: 214px; height: 44px; }
.l-store { left: 750px; top: 805px; color: #000; }
.l-set { left: 647px; top: 847px; font-size: 24px; line-height: 27.5px; color: #000; }
.gbang { position: absolute; left: 766px; top: 840px; width: 48px; height: 48px; background: #2d6e1a; }
.g-ring { left: 8px; top: 8px; width: 32px; height: 32px; border-color: #667; }
.n-three { left: 822px; top: 838px; width: 62px; height: 44px; }
.m-wr { left: 896px; top: 840px; width: 76px; height: 44px; }
.m-again { left: 766px; top: 894px; width: 130px; height: 44px; }
.o-pattr { left: 980px; top: 838px; width: 264px; height: 98px; padding: 0 8px; line-height: 27.5px; display: block; }

/* annotations */
.note-title {
    position: absolute;
    left: 1323px;
    top: 34px;
    width: 383px;
    height: 92px;
    background: #fff;
    padding-left: 12px;
    font-size: 61px;
    font-weight: bold;
    line-height: 92px;
    white-space: nowrap;
}

.note-blue {
    position: absolute;
    left: 1327px;
    top: 126px;
    width: 1101px;
    height: 188px;
    background: #479ef8;
    padding: 10px 0 0 8px;
    font-size: 46px;
    font-weight: bold;
    line-height: 58px;
    white-space: nowrap;
}

.note-wide {
    letter-spacing: 0.35px;
}

.note-low {
    position: absolute;
    left: 1349px;
    top: 836px;
    width: 1079px;
    height: 72px;
    background: #479ef8;
    padding: 8px 0 0 8px;
    font-size: 46px;
    font-weight: bold;
    line-height: 58px;
    letter-spacing: 0.35px;
    white-space: nowrap;
}
```
